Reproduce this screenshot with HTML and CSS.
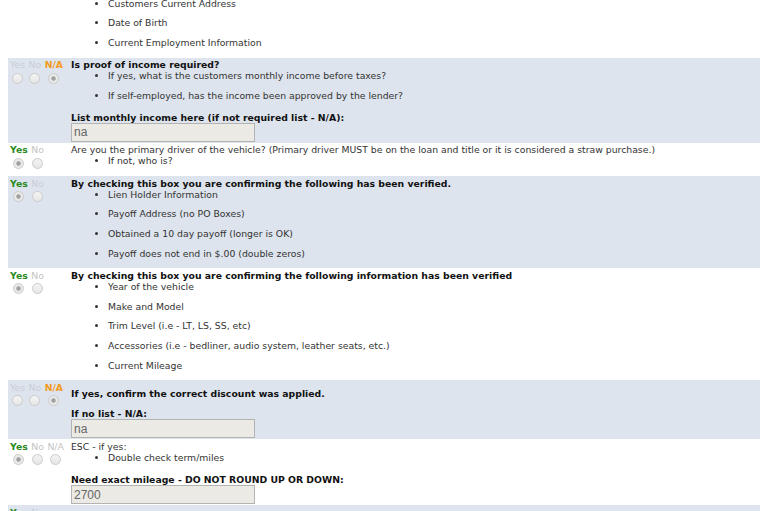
FILE: index.html
```html
<!DOCTYPE html>
<html lang="en">
<head>
    <meta charset="UTF-8">
    <title>Deal Checklist</title>
    <link rel="stylesheet" href="styles.css">
</head>
<body>
    <div class="checklist">
        <!-- continued from the previous question -->
        <div class="item">
            <div class="choice"></div>
            <div class="body">
                <ul>
                    <li>Customers Current Address</li>
                    <li>Date of Birth</li>
                    <li>Current Employment Information</li>
                </ul>
            </div>
        </div>

        <div class="item alt">
            <div class="choice">
                <label class="opt"><span>Yes</span><input type="radio" name="q2" disabled></label>
                <label class="opt"><span>No</span><input type="radio" name="q2" disabled></label>
                <label class="opt na"><span>N/A</span><input type="radio" name="q2" checked disabled></label>
            </div>
            <div class="body">
                <p class="q strong">Is proof of income required?</p>
                <ul>
                    <li>If yes, what is the customers monthly income before taxes?</li>
                    <li>If self-employed, has the income been approved by the lender?</li>
                </ul>
                <label class="field-label">List monthly income here (if not required list - N/A):</label>
                <input class="field" type="text" value="na" readonly>
            </div>
        </div>

        <div class="item">
            <div class="choice">
                <label class="opt yes"><span>Yes</span><input type="radio" name="q3" checked disabled></label>
                <label class="opt"><span>No</span><input type="radio" name="q3" disabled></label>
            </div>
            <div class="body">
                <p class="q">Are you the primary driver of the vehicle? (Primary driver MUST be on the loan and title or it is considered a straw purchase.)</p>
                <ul>
                    <li>If not, who is?</li>
                </ul>
            </div>
        </div>

        <div class="item alt">
            <div class="choice">
                <label class="opt yes"><span>Yes</span><input type="radio" name="q4" checked disabled></label>
                <label class="opt"><span>No</span><input type="radio" name="q4" disabled></label>
            </div>
            <div class="body">
                <p class="q strong">By checking this box you are confirming the following has been verified.</p>
                <ul>
                    <li>Lien Holder Information</li>
                    <li>Payoff Address (no PO Boxes)</li>
                    <li>Obtained a 10 day payoff (longer is OK)</li>
                    <li>Payoff does not end in $.00 (double zeros)</li>
                </ul>
            </div>
        </div>

        <div class="item">
            <div class="choice">
                <label class="opt yes"><span>Yes</span><input type="radio" name="q5" checked disabled></label>
                <label class="opt"><span>No</span><input type="radio" name="q5" disabled></label>
            </div>
            <div class="body">
                <p class="q strong">By checking this box you are confirming the following information has been verified</p>
                <ul>
                    <li>Year of the vehicle</li>
                    <li>Make and Model</li>
                    <li>Trim Level (i.e - LT, LS, SS, etc)</li>
                    <li>Accessories (i.e - bedliner, audio system, leather seats, etc.)</li>
                    <li>Current Mileage</li>
                </ul>
            </div>
        </div>

        <div class="item alt">
            <div class="choice">
                <label class="opt"><span>Yes</span><input type="radio" name="q6" disabled></label>
                <label class="opt"><span>No</span><input type="radio" name="q6" disabled></label>
                <label class="opt na"><span>N/A</span><input type="radio" name="q6" checked disabled></label>
            </div>
            <div class="body">
                <p class="q strong spaced">If yes, confirm the correct discount was applied.</p>
                <label class="field-label">If no list - N/A:</label>
                <input class="field" type="text" value="na" readonly>
            </div>
        </div>

        <div class="item">
            <div class="choice">
                <label class="opt yes"><span>Yes</span><input type="radio" name="q7" checked disabled></label>
                <label class="opt"><span>No</span><input type="radio" name="q7" disabled></label>
                <label class="opt"><span>N/A</span><input type="radio" name="q7" disabled></label>
            </div>
            <div class="body">
                <p class="q">ESC - if yes:</p>
                <ul>
                    <li>Double check term/miles</li>
                </ul>
                <label class="field-label">Need exact mileage - DO NOT ROUND UP OR DOWN:</label>
                <input class="field" type="text" value="2700" readonly>
            </div>
        </div>

        <div class="item alt">
            <div class="choice">
                <label class="opt yes"><span>Yes</span><input type="radio" name="q8" checked disabled></label>
                <label class="opt"><span>No</span><input type="radio" name="q8" disabled></label>
            </div>
            <div class="body tall"></div>
        </div>
    </div>
</body>
</html>
```

FILE: styles.css
```css
* {
    box-sizing: border-box;
}

body {
    margin: 0 8px;
    background-color: #fff;
    font-family: "DejaVu Sans", Verdana, sans-serif;
    font-size: 9.3px;
    line-height: 11px;
    color: #333;
}

.checklist {
    margin-top: -4px;
}

.item {
    display: flex;
    padding: 1.5px 0 1px;
}

.item.alt {
    background-color: #dde4ed;
}

/* yes / no / n/a column */
.choice {
    width: 63px;
    flex: none;
    display: flex;
    align-items: flex-start;
    gap: 3.5px;
    padding-left: 2px;
}

.opt {
    display: flex;
    flex-direction: column;
    align-items: center;
    color: #c4c4c4;
}

.alt .opt {
    color: #c9ced6;
}

.opt.yes span {
    color: #2a8a22;
    font-weight: bold;
}

.opt.na span {
    color: #f39a1e;
    font-weight: bold;
}

.opt input {
    appearance: none;
    -webkit-appearance: none;
    width: 11px;
    height: 11px;
    margin: 2.5px 0 0;
    border: 1px solid #cbcbcb;
    border-radius: 50%;
    background: linear-gradient(#f4f4f4, #e6e6e6);
}

.opt input:checked {
    background: radial-gradient(circle, #a0a0a0 0, #a0a0a0 1.8px, #e9e9e9 2.6px);
}

.body {
    flex: 1;
}

.body.tall {
    height: 40px;
}

.q {
    margin: 0;
}

.q.strong {
    font-weight: bold;
    color: #111;
}

.q.spaced {
    padding-top: 6px;
}

.body ul {
    margin: 0;
    padding-left: 37px;
}

.body li {
    margin-bottom: 8.7px;
}

/* the list's last margin collapses into this one */
.field-label {
    display: block;
    margin-top: 11.2px;
    font-weight: bold;
    color: #111;
}

.q.spaced + .field-label {
    margin-top: 9.5px;
}

.field {
    display: block;
    width: 184px;
    height: 19px;
    margin: 0;
    padding: 0 2px;
    border: 1px solid #b3b3b3;
    background-color: #ebeae4;
    font-family: "Liberation Sans", Arial, sans-serif;
    font-size: 12px;
    color: #666;
    outline: none;
}
```
